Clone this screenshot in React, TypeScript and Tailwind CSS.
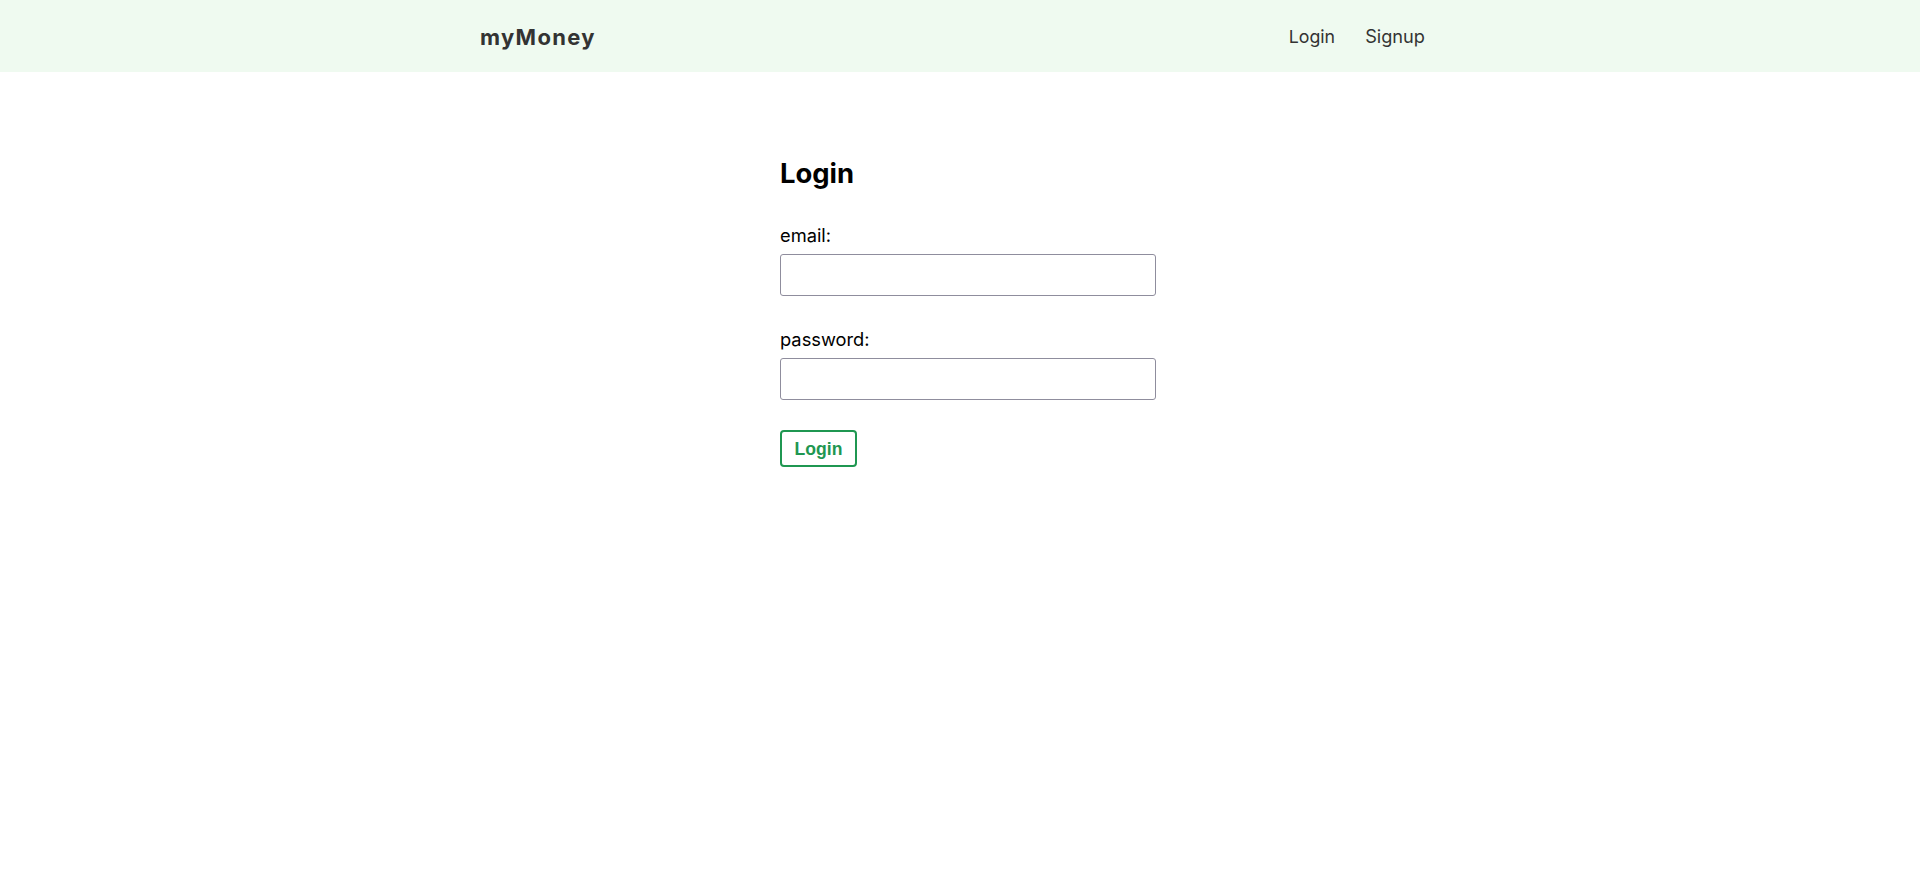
import React from "react";

export default function App() {
  return (
    <div className="min-h-screen bg-white" style={{ fontFamily: "Inter, 'Noto Sans', sans-serif" }}>
      <nav className="h-[72px] w-full bg-[#effaf0]">
        <div className="mx-auto flex h-full max-w-[960px] items-center pt-[2px]">
          <div className="mr-auto text-[22px] font-bold tracking-[1.3px] text-[#333333]">myMoney</div>
          <a className="ml-[30px] text-[17.8px] text-[#333333]">Login</a>
          <a className="ml-[30px] mr-[15px] text-[18.2px] text-[#333333]">Signup</a>
        </div>
      </nav>
      <form className="mx-auto w-[360px] pt-[81px]" onSubmit={(e) => e.preventDefault()}>
        <h2 className="h-[40px] text-[27.4px] font-bold leading-[40px] text-black">Login</h2>
        <label className="mt-[30px] block">
          <span className="block h-[24px] text-[18.3px] leading-[24px] text-black">email:</span>
          <input
            type="email"
            className="mt-[7px] block h-[42px] w-[376px] rounded-[3px] border border-[#8f8d9d] px-2 text-[17.6px] text-[#777] outline-none"
          />
        </label>
        <label className="mt-[31px] block">
          <span className="block h-[24px] text-[18.3px] leading-[24px] text-black">password:</span>
          <input
            type="password"
            className="mt-[7px] block h-[42px] w-[376px] rounded-[3px] border border-[#8f8d9d] px-2 text-[17.6px] text-[#777] outline-none"
          />
        </label>
        <button
          type="submit"
          className="mt-[30px] flex h-[37px] w-[77px] items-center justify-center rounded-[4px] border-2 border-[#1f9751] bg-transparent pt-[2px] text-[17.6px] font-bold text-[#1f9751]"
          style={{ fontFamily: "'Liberation Sans', Arial, sans-serif" }}
        >
          Login
        </button>
      </form>
    </div>
  );
}
